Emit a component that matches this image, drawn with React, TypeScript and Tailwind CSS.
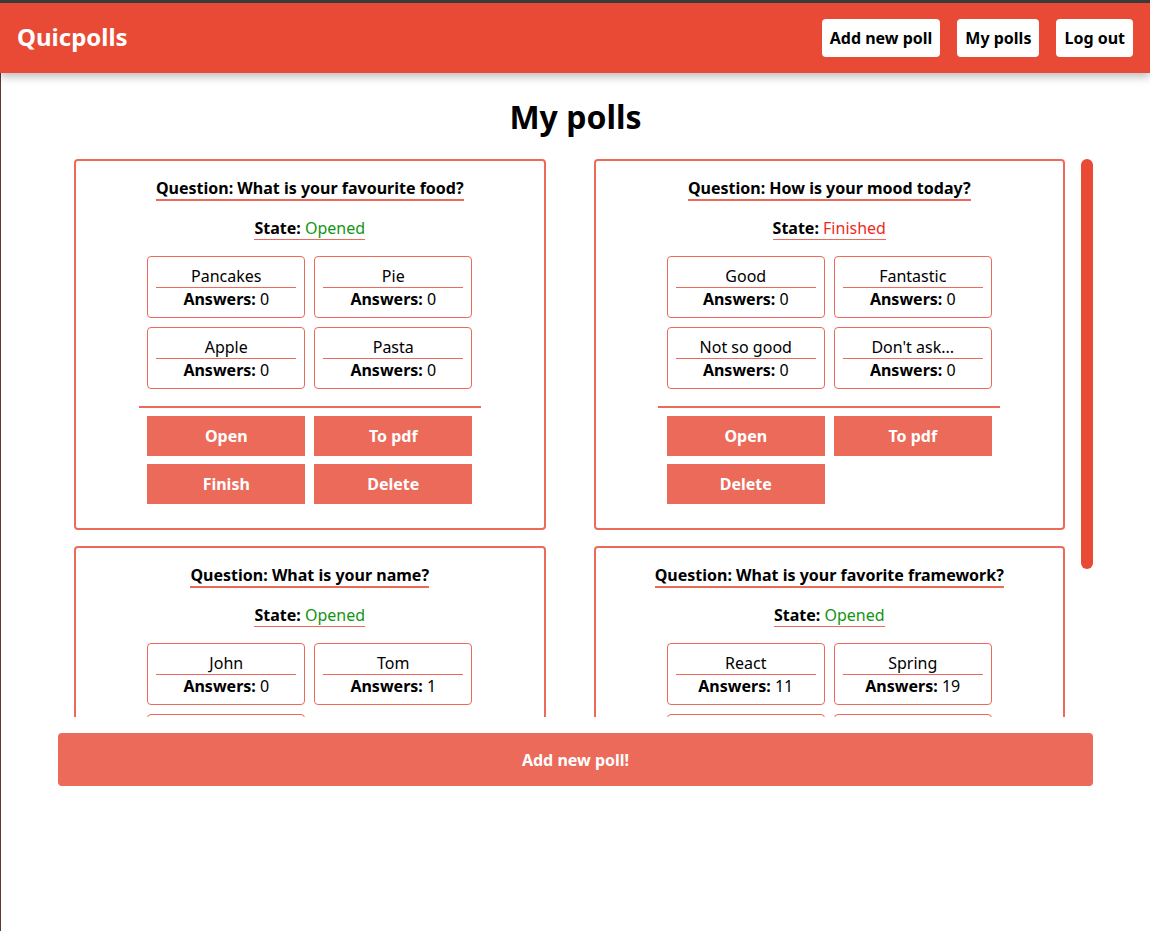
import React from "react";

type Opt = { name: string; answers: number };
type Poll = { question: string; state: "Opened" | "Finished"; options: Opt[]; buttons: string[] };

const polls: Poll[] = [
  {
    question: "What is your favourite food?",
    state: "Opened",
    options: [
      { name: "Pancakes", answers: 0 },
      { name: "Pie", answers: 0 },
      { name: "Apple", answers: 0 },
      { name: "Pasta", answers: 0 },
    ],
    buttons: ["Open", "To pdf", "Finish", "Delete"],
  },
  {
    question: "How is your mood today?",
    state: "Finished",
    options: [
      { name: "Good", answers: 0 },
      { name: "Fantastic", answers: 0 },
      { name: "Not so good", answers: 0 },
      { name: "Don't ask...", answers: 0 },
    ],
    buttons: ["Open", "To pdf", "Delete"],
  },
  {
    question: "What is your name?",
    state: "Opened",
    options: [
      { name: "John", answers: 0 },
      { name: "Tom", answers: 1 },
      { name: "Anna", answers: 0 },
    ],
    buttons: ["Open", "To pdf", "Finish", "Delete"],
  },
  {
    question: "What is your favorite framework?",
    state: "Opened",
    options: [
      { name: "React", answers: 11 },
      { name: "Spring", answers: 19 },
      { name: "Angular", answers: 4 },
      { name: "Django", answers: 7 },
    ],
    buttons: ["Open", "To pdf", "Finish", "Delete"],
  },
];

function PollCard({ poll }: { poll: Poll }) {
  return (
    <div className="border-2 border-[#ec6a5a] rounded-[4px] flex flex-col items-center pt-4 pb-6">
      <div className="font-bold text-[16px] leading-[22px] border-b-2 border-[#ec6a5a] text-black">
        Question: {poll.question}
      </div>
      <div className="mt-4 text-[16px] leading-[22px] border-b border-[#ec6a5a]">
        <span className="font-bold">State: </span>
        <span className={poll.state === "Opened" ? "text-[#139413]" : "text-[#ee2a1a]"}>{poll.state}</span>
      </div>
      <div className="mt-4 grid grid-cols-[158px_158px] gap-[9px]">
        {poll.options.map((o, i) => (
          <div key={i} className="border border-[#ec6a5a] rounded-[4px] pt-2 pb-[7px] px-2 flex flex-col items-stretch text-center">
            <div className="text-[16px] leading-[22px] border-b border-[#ec6a5a]">{o.name}</div>
            <div className="text-[16px] leading-[22px]">
              <span className="font-bold">Answers: </span>
              {o.answers}
            </div>
          </div>
        ))}
      </div>
      <div className="mt-[17px] w-[342px] h-[2px] bg-[#ec6a5a]" />
      <div className="mt-2 grid grid-cols-[158px_158px] gap-x-[9px] gap-y-2">
        {poll.buttons.map((b, i) => (
          <button key={i} className="h-10 bg-[#ec6a5a] text-white font-bold text-[16px]">
            {b}
          </button>
        ))}
      </div>
    </div>
  );
}

export default function App() {
  return (
    <div
      className="h-[931px] flex flex-col bg-white border-t-[3px] border-[#3a3a3a] overflow-hidden"
      style={{ fontFamily: '"Noto Sans", "Open Sans", sans-serif' }}
    >
      <header className="relative z-10 h-[70px] shrink-0 bg-[#e84a35] flex items-center justify-between pl-[17px] pr-[17px] shadow-[0_4px_8px_rgba(0,0,0,0.25)]">
        <div className="text-white font-bold text-[24px] leading-none -mt-[2px]">Quicpolls</div>
        <nav className="flex gap-[17px] -mt-[1px]">
          {["Add new poll", "My polls", "Log out"].map((t) => (
            <button key={t} className="bg-white rounded-[4px] h-[38px] px-2 font-bold text-[16px] text-black">
              {t}
            </button>
          ))}
        </nav>
      </header>
      <main className="flex-1 border-l border-[#5c3a2f] flex flex-col items-center">
        <h1 className="mt-[22px] text-[32px] leading-[44px] font-bold text-black">My polls</h1>
        <div className="mt-[20px] w-[1035px] h-[558px] flex">
          <div className="flex-1 overflow-hidden px-4">
            <div className="grid grid-cols-2 gap-x-12 gap-y-4">
              {polls.map((p, i) => (
                <PollCard key={i} poll={p} />
              ))}
            </div>
          </div>
          <div className="w-[12px] shrink-0">
            <div className="h-[410px] w-[12px] rounded-full bg-[#e84a35]" />
          </div>
        </div>
        <button className="mt-4 w-[1035px] h-[53px] rounded-[4px] bg-[#ec6a5a] text-white font-bold text-[16px]">
          Add new poll!
        </button>
      </main>
    </div>
  );
}
